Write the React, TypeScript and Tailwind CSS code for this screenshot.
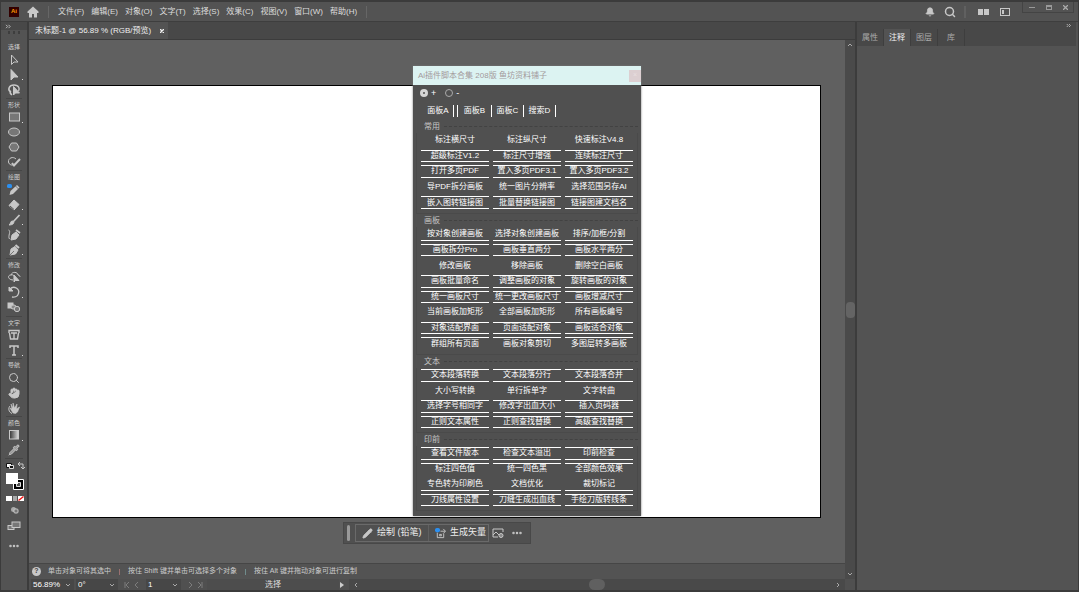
import React from "react";
import { Bell, Search, Hand, Pencil, Pipette, MoreHorizontal } from "lucide-react";

const UI_FONT = "font-['Liberation_Sans','Noto_Sans_CJK_SC',sans-serif]";

const menus = ["文件(F)", "编辑(E)", "对象(O)", "文字(T)", "选择(S)", "效果(C)", "视图(V)", "窗口(W)", "帮助(H)"];

function Glyph({ children }: { children: React.ReactNode }) {
  return (
    <svg viewBox="0 0 14 14" className="size-[14px]" fill="none" stroke="#c8c8c8" strokeWidth="1" aria-hidden="true">
      {children}
    </svg>
  );
}

type Tool = { name: string; icon: React.ReactNode; more?: boolean };
type Section = { label: string; tools: Tool[] };

const lucide = "size-[12px]";

const sections: Section[] = [
  {
    label: "选择",
    tools: [
      { name: "选择工具", icon: <Glyph><path d="M4.500 2v9.500l2.500-2.500h4z" /></Glyph> },
      { name: "直接选择", more: true, icon: <Glyph><path d="M4 1.500v10.500l3-3h4z" fill="#c8c8c8" /></Glyph> },
      { name: "套索", icon: <Glyph><path d="M4 9C0 7 2 2 7 2s6 4 4.500 6M3.500 8c-1 2 0 3 1.500 4" strokeWidth="1.500" /><path d="M6.500 3.500v8.500l2-2h4z" fill="#c8c8c8" /></Glyph> },
    ],
  },
  {
    label: "形状",
    tools: [
      { name: "矩形", more: true, icon: <Glyph><rect x="2.500" y="3" width="10" height="8" fill="#777" /></Glyph> },
      { name: "椭圆", icon: <Glyph><ellipse cx="7" cy="7" rx="5.500" ry="4" fill="#777" /></Glyph> },
      { name: "多边形", icon: <Glyph><path d="M4.500 3h5l2.500 4-2.500 4h-5L2 7z" fill="#777" /></Glyph> },
      { name: "Shaper", icon: <Glyph><path d="M9 4C6 1 1 3 1.500 7c.5 3 4 4 6 2" /><path d="M5 8l2 2.500L13 4" strokeWidth="2" /></Glyph> },
    ],
  },
  {
    label: "绘图",
    tools: [
      { name: "铅笔", icon: <Glyph><path d="M2.500 12l1-4L10 2l2.500 2.500L6 11z" fill="#c8c8c8" stroke="none" /><path d="M8.500 3l3 3" stroke="#535353" strokeWidth=".7" /><rect x="0" y="1" width="5" height="4" rx="1.500" fill="#2b8ff0" stroke="none" /></Glyph> },
      { name: "橡皮擦", more: true, icon: <Glyph><path d="M2 7.500L7 2l5 4.500L7 12z" fill="#c8c8c8" /><path d="M3 8l4 3.500" stroke="#535353" /></Glyph> },
      { name: "画笔", more: true, icon: <Glyph><path d="M12.500 2L6 9" strokeWidth="1.700" /><path d="M2 12c2-1 1-4 3.500-4C8 9 7 12 2 12z" fill="#c8c8c8" /></Glyph> },
      { name: "曲率", icon: <Glyph><path d="M1.500 2c3 1-1 6 1 9" /><path d="M4 12l1-5 4-3 3 3-3 4z" fill="#c8c8c8" /><path d="M9 2l4 3" strokeWidth="1.700" /></Glyph> },
      { name: "钢笔", more: true, icon: <Glyph><path d="M3 12l1-6 4-2.500L11 7l-2.500 4z" fill="#c8c8c8" /><path d="M8.500 2l3.500 3" strokeWidth="2" /><path d="M3 12l4-4" stroke="#535353" strokeWidth=".7" /></Glyph> },
    ],
  },
  {
    label: "修改",
    tools: [
      { name: "形状生成器", icon: <Glyph><path d="M6 10C1 10 0 5 4 5c1-4 7-3 7 0 2 0 2 2 2 2M4 5c3-1 4 2 3 4" /><path d="M7 5v7l1.500-1.500H12z" fill="#c8c8c8" /></Glyph> },
      { name: "旋转", more: true, icon: <Glyph><path d="M3 4c4-4 10 0 8.500 4.500C10.500 12 7 12.500 5 12" strokeWidth="1.300" /><path d="M2 2v4h4z" fill="#c8c8c8" /></Glyph> },
      { name: "混合", icon: <Glyph><rect x="1" y="3" width="5" height="5" fill="#c8c8c8" /><rect x="4" y="5" width="5" height="4" rx="2" fill="#888" /><circle cx="10" cy="9" r="2.700" fill="#777" /></Glyph> },
    ],
  },
  {
    label: "文字",
    tools: [
      { name: "修饰文字", icon: <Glyph><path d="M2 5V2.500h10V5M2.500 5l1 6h7l1-6M4 5h6M7 5v6M5.500 11h3" strokeWidth="1.400" /></Glyph> },
      { name: "文字工具", more: true, icon: <Glyph><path d="M3 5V3h8v2M7 3v9M5 12h4" strokeWidth="1.500" /></Glyph> },
    ],
  },
  {
    label: "导航",
    tools: [
      { name: "缩放", icon: <Search className={lucide} strokeWidth={2} /> },
      { name: "抓手", icon: <Hand className={lucide} strokeWidth={2} fill="#c8c8c8" /> },
      { name: "旋转视图", icon: <Glyph><path d="M6 12L3 7l2 1-1-5 2 4V2l1.500 5L10 3 9.500 8l3-2-2 5-2 1.500z" fill="#c8c8c8" strokeWidth=".6" /><path d="M3 5C1 7 1.500 11 5 12.500" /></Glyph> },
    ],
  },
  {
    label: "颜色",
    tools: [
      { name: "渐变", more: true, icon: <Glyph><defs><linearGradient id="grad"><stop stopColor="#333" /><stop offset="1" stopColor="#ddd" /></linearGradient></defs><rect x="2.500" y="2.500" width="9" height="8.500" fill="url(#grad)" /></Glyph> },
      { name: "吸管", icon: <Pipette className={lucide} strokeWidth={2} fill="#999" /> },
    ],
  },
];

function Toolbar() {
  return (
    <nav aria-label="工具" className="flex w-[28px] shrink-0 flex-col border-r-2 border-[#3c3c3c] bg-[#535353] text-[#c8c8c8]">
      <div className="flex h-2 items-center bg-[#484848] pl-1">
        <svg viewBox="0 0 8 6" className="h-[5px] w-[7px]" fill="none" stroke="#ccc" aria-hidden="true"><path d="M1 1l2 2-2 2M4 1l2 2-2 2" /></svg>
      </div>
      <div className="flex h-[10px] items-start justify-center gap-[3px] pt-px">
        {[0, 1, 2].map((i) => <span key={i} className="h-[3px] w-[2px] bg-[#3e3e3e]" />)}
      </div>
      <div className="flex h-[418px] flex-col justify-between">
        {sections.map((s, i) => (
          <section key={s.label}>
            <h2 className={`mx-[5px] h-[12px] border-t text-center text-[6px] leading-[13px] text-[#d0d0d0] ${i === 0 ? "border-transparent" : "border-[#464646]"}`}>{s.label}</h2>
            {s.tools.map((t) => (
              <button key={t.name} aria-label={t.name} className="relative flex h-[15px] w-full items-center justify-center">
                {t.icon}
                {t.more && <span className="absolute right-1 bottom-[2px] size-px bg-[#ddd]" />}
              </button>
            ))}
          </section>
        ))}
      </div>
      <button aria-label="填色和描边" className="mx-auto">
        <svg viewBox="0 0 22 62" className="h-[62px] w-[22px]" fill="none" aria-hidden="true">
          <path d="M2 .5h18" stroke="#464646" />
          <path d="M3.500 5.500h5v4h-5z" fill="#fff" stroke="#111" />
          <path d="M6.500 7.500h4v3h-4z" fill="#111" stroke="#ddd" />
          <path d="M15 6h5v5M17 4l-2 2 2 2M18 9l2 2 2-2" stroke="#c8c8c8" />
          <path d="M10.500 21.500h10v10h-10z" stroke="#fff" strokeWidth="1" fill="#000" />
          <path d="M13.500 24.500h4v4h-4z" stroke="#ddd" fill="#535353" />
          <path d="M3 15h12v11H3z" fill="#fff" />
          <path d="M3 38h6v5H3z" fill="#fff" /><path d="M10 38h4v5h-4z" fill="#aaa" /><path d="M15 38h6v5h-6z" fill="#fff" /><path d="M15.500 42.500l5-4" stroke="#e11" strokeWidth="1.500" />
          <circle cx="10.500" cy="51.500" r="2.500" fill="#aaa" /><rect x="11" y="51" width="4" height="4" rx="1" fill="#777" stroke="#c8c8c8" />
        </svg>
      </button>
      <button aria-label="屏幕模式" className="mx-auto flex h-[12px] items-center">
        <svg viewBox="0 0 14 10" className="h-[10px] w-[14px]" fill="#777" stroke="#c8c8c8" aria-hidden="true"><rect x="1" y="4.500" width="6" height="4" /><rect x="5" y="1" width="8" height="5.500" /></svg>
      </button>
      <button aria-label="编辑工具栏" className="mx-auto mt-2"><MoreHorizontal className="size-[12px]" strokeWidth={3} /></button>
    </nav>
  );
}

type Edge = "none" | "top" | "bottom" | "both";
type Row = { edge: Edge; items: string[] };

const edges: Record<Edge, string> = {
  none: "border-y border-transparent",
  top: "border-y border-t-white border-b-transparent",
  bottom: "border-y border-t-transparent border-b-white",
  both: "border-y border-white",
};

const groups: { title: string; rows: Row[]; height: string }[] = [
  {
    title: "常用",
    height: "h-[78px]",
    rows: [
      { edge: "none", items: ["标注横尺寸", "标注纵尺寸", "快速标注V4.8"] },
      { edge: "both", items: ["超级标注V1.2", "标注尺寸增强", "连续标注尺寸"] },
      { edge: "both", items: ["打开多页PDF", "置入多页PDF3.1", "置入多页PDF3.2"] },
      { edge: "none", items: ["导PDF拆分画板", "统一图片分辨率", "选择范围另存AI"] },
      { edge: "both", items: ["嵌入图转链接图", "批量替换链接图", "链接图建文档名"] },
    ],
  },
  {
    title: "画板",
    height: "h-[125px]",
    rows: [
      { edge: "bottom", items: ["按对象创建画板", "选择对象创建画板", "排序/加框/分割"] },
      { edge: "both", items: ["画板拆分Pro", "画板垂直两分", "画板水平两分"] },
      { edge: "none", items: ["修改画板", "移除画板", "删除空白画板"] },
      { edge: "both", items: ["画板批量命名", "调整画板的对象", "旋转画板的对象"] },
      { edge: "both", items: ["统一画板尺寸", "统一更改画板尺寸", "画板增减尺寸"] },
      { edge: "none", items: ["当前画板加矩形", "全部画板加矩形", "所有画板编号"] },
      { edge: "both", items: ["对象适配界面", "页面适配对象", "画板适合对象"] },
      { edge: "top", items: ["群组所有页面", "画板对象剪切", "多图层转多画板"] },
    ],
  },
  {
    title: "文本",
    height: "h-[62px]",
    rows: [
      { edge: "both", items: ["文本段落转换", "文本段落分行", "文本段落合并"] },
      { edge: "none", items: ["大小写转换", "单行拆单字", "文字转曲"] },
      { edge: "both", items: ["选择字号相同字", "修改字出血大小", "插入页码器"] },
      { edge: "both", items: ["正则文本属性", "正则查找替换", "高级查找替换"] },
    ],
  },
  {
    title: "印前",
    height: "h-[62px]",
    rows: [
      { edge: "both", items: ["查看文件版本", "检查文本溢出", "印前检查"] },
      { edge: "top", items: ["标注四色值", "统一四色黑", "全部颜色效果"] },
      { edge: "bottom", items: ["专色转为印刷色", "文档优化", "裁切标记"] },
      { edge: "both", items: ["刀线属性设置", "刀缝生成出血线", "手绘刀版转线条"] },
    ],
  },
];

function ScriptPanel() {
  return (
    <div role="dialog" aria-label="脚本合集" className="absolute top-[26px] left-[384px] h-[450px] w-[228px] bg-[#505050] text-[8px] text-white shadow-[0_0_2px_#777]">
      <header className="flex h-[19px] items-center justify-between bg-[#dcf3f2] pl-[5px] text-[8px] text-[#a39a9c]">
        <span>Ai插件脚本合集 208版 鱼坊资料铺子</span>
        <button aria-label="关闭" className="flex h-3 w-3 items-center justify-center bg-[#dccfd1] text-[7px] text-[#e9dfe0]">×</button>
      </header>
      <div className="flex h-4 items-center gap-[9px] pl-[7px]">
        {["+", "-"].map((v, i) => (
          <label key={v} className="flex items-center gap-[3px] text-[9px] leading-none">
            <input type="radio" name="mode" defaultChecked={i === 0} className="size-2 appearance-none rounded-full border border-[#aaa] checked:border-[3px] checked:border-[#d5d5d5]" />
            {v}
          </label>
        ))}
      </div>
      <div role="tablist" className="ml-[10px] flex h-[19px] items-center">
        {["面板A", "面板B", "面板C", "搜索D"].map((t, i) => (
          <button key={t} role="tab" className={`h-3 border-white text-center leading-[11px] ${i === 0 ? "mr-[3px] w-[31px] border-r" : i === 1 ? "w-[35px] border-x" : "w-[32px] border-r"}`}>{t}</button>
        ))}
      </div>
      <div className="flex flex-col px-[3px]">
        {groups.map((g) => (
          <section key={g.title}>
            <div className="flex h-[13px] items-center gap-1 pl-2 leading-none text-[#c5c5c5]">
              <h3>{g.title}</h3>
              <span className="flex-1 border-t border-dashed border-[#424242]" />
            </div>
            <div className="border-x border-b border-[#4a4a4a] pb-[2px]">
              <div className={`grid auto-rows-fr grid-cols-3 gap-x-1 px-1 ${g.height}`}>
                {g.rows.flatMap((r) => r.items.map((t) => (
                  <button key={t} className={`mt-px mb-[2px] flex min-h-0 items-center justify-center leading-none whitespace-nowrap ${edges[r.edge]}`}>{t}</button>
                )))}
              </div>
            </div>
          </section>
        ))}
      </div>
    </div>
  );
}

function TaskBar() {
  return (
    <div role="toolbar" aria-label="上下文任务栏" className="absolute top-[482px] left-[314px] flex h-[22px] w-[188px] items-center border border-[#484848] bg-[#505050] text-[9px] text-[#eee]">
      <span className="mx-[3px] h-4 w-[3px] rounded bg-[#999]" />
      <div className="ml-[2px] flex h-[18px] w-[134px] items-center border border-[#6a6a6a]">
        <button className="flex h-full flex-1 items-center gap-1 border-r border-[#606060] pl-[6px] whitespace-nowrap"><Pencil className="size-[11px] text-[#c8c8c8]" fill="#c8c8c8" />绘制 (铅笔)</button>
        <button className="flex h-full w-[59px] items-center gap-1 pl-[6px] whitespace-nowrap">
          <svg viewBox="0 0 12 12" className="size-[11px] shrink-0" fill="none" stroke="#c8c8c8" aria-hidden="true"><path d="M2.500 5v5.500h7V6M6 3.500h5M9 1l2.500 2.500L9 6M5 7h2v1.500H5z" /><rect x="0" y="0" width="5.500" height="4.500" rx="2" fill="#2b8ff0" stroke="none" /></svg>
          生成矢量
        </button>
      </div>
      <button aria-label="图像" className="ml-[3px]">
        <svg viewBox="0 0 12 12" className="size-3" fill="none" stroke="#c8c8c8" aria-hidden="true"><path d="M6 10H1V2h10v3M1 8l3-3 3 3" /><circle cx="9" cy="8.500" r="2" fill="#888" /></svg>
      </button>
      <button aria-label="更多" className="ml-[7px]"><MoreHorizontal className="size-3 text-[#c8c8c8]" strokeWidth={3} /></button>
    </div>
  );
}

function Arrow({ d }: { d: string }) {
  return <svg viewBox="0 0 6 6" className="size-[6px]" fill="none" stroke="#aaa" aria-hidden="true"><path d={d} /></svg>;
}

function Picker({ label, value, width }: { label: string; value: string; width: string }) {
  return (
    <span className={`relative flex h-full items-center bg-[#474747] ${width}`}>
      <select aria-label={label} className="h-full w-full appearance-none pl-[2px] text-[8px] leading-none text-white"><option>{value}</option></select>
      <span className="pointer-events-none absolute right-[3px]"><Arrow d="M1 2l2 2 2-2" /></span>
    </span>
  );
}

function StatusBar() {
  return (
    <footer className="flex h-[11px] shrink-0 items-center bg-[#505050] text-[8px] text-[#ddd]">
      <div className="flex h-full items-center gap-[2px] pl-[2px]">
        <Picker label="缩放" value="56.89%" width="w-[43px]" />
        <Picker label="旋转" value="0°" width="w-[42px]" />
        <div className="flex w-[24px] justify-center gap-[4px] opacity-50"><Arrow d="M1 0v6M5 0L2 3l3 3" /><Arrow d="M4 0L1 3l3 3" /></div>
        <Picker label="画板" value="1" width="w-[35px]" />
        <div className="flex w-[24px] justify-center gap-[4px] opacity-50"><Arrow d="M2 0l3 3-3 3" /><Arrow d="M1 0l3 3-3 3M5 0v6" /></div>
      </div>
      <div className="flex h-full w-[132px] items-center justify-center bg-[#4d4d4d]">选择</div>
      <svg viewBox="0 0 6 6" className="mr-1 size-[6px]" fill="#ccc" aria-hidden="true"><path d="M1 0l4 3-4 3z" /></svg>
      <div className="flex h-full flex-1 items-center justify-between bg-[#494949] px-1">
        <Arrow d="M4 1L2 3l2 2" />
        <span className="h-full w-4 rounded-full bg-[#606060]" />
        <Arrow d="M2 1l2 2-2 2" />
      </div>
      <span className="h-full w-[10px]" />
    </footer>
  );
}

export default function App() {
  return (
    <div className={`flex h-screen flex-col overflow-hidden border-t-2 border-r border-b-2 border-l border-[#3b3b3b] bg-[#535353] text-[8px] text-[#ddd] ${UI_FONT}`}>
      <header className="flex h-5 shrink-0 items-center border-b border-[#3e3e3e]">
        <span className="ml-2 flex size-[10px] items-center justify-center bg-[#330000] text-[6px] font-bold text-[#ff9a00]">Ai</span>
        <button aria-label="主页" className="ml-2">
          <svg viewBox="0 0 12 12" className="size-3" fill="#c8c8c8" aria-hidden="true"><path d="M6 .5L.5 5.500V7H2v4.500h3V8h2v3.500h3V7h1.500V5.500z" /></svg>
        </button>
        <span className="ml-[9px] h-3 border-l border-[#666]" />
        <nav className="ml-[9px] flex gap-[7px]">
          {menus.map((m) => <a key={m} href="#" className="whitespace-nowrap">{m}</a>)}
        </nav>
        <span className="ml-[9px] h-3 border-l border-[#666]" />
        <div className="ml-auto flex h-full items-center text-[#c8c8c8]">
          <button aria-label="通知"><Bell className="size-[10px]" fill="#c8c8c8" /></button>
          <button aria-label="搜索" className="ml-[9px]"><Search className="size-3" strokeWidth={3} /></button>
          <span className="ml-2 h-3 border-l-2 border-[#606060]" />
          <button aria-label="排列文档" className="ml-3 flex gap-px"><span className="h-[6px] w-[5px] bg-[#c8c8c8]" /><span className="h-[6px] w-[5px] bg-[#c8c8c8]" /></button>
          <button aria-label="切换工作区" className="ml-[11px] flex h-2 w-[10px] border border-[#c8c8c8] p-px"><span className="w-[2px] bg-[#c8c8c8]" /></button>
          <div className="mr-1 ml-3 flex h-[11px] w-[52px] items-center justify-around self-start border border-t-0 border-[#444]">
            <button aria-label="最小化" className="h-px w-[6px] bg-[#999]" />
            <button aria-label="最大化" className="h-[5px] w-[6px] border border-t-2 border-[#999]" />
            <button aria-label="关闭"><svg viewBox="0 0 6 6" className="size-[5px]" stroke="#aaa" strokeWidth="1.500"><path d="M0 0l6 6M6 0L0 6" /></svg></button>
          </div>
        </div>
      </header>

      <div className="flex min-h-0 flex-1">
        <Toolbar />
        <main className="flex min-w-0 flex-1 flex-col">
          <div className="flex h-[18px] shrink-0 border-b border-[#3c3c3c] bg-[#484848]">
            <div className="flex w-[139px] items-center justify-between bg-[#535353] pr-1 pl-[6px] text-[8px] whitespace-nowrap text-[#eee]">
              未标题-1 @ 56.89 % (RGB/预览)
              <button aria-label="关闭文档"><svg viewBox="0 0 6 6" className="size-[4px]" stroke="#eee" strokeWidth="2"><path d="M0 0l6 6M6 0L0 6" /></svg></button>
            </div>
          </div>
          <div className="flex min-h-0 flex-1">
            <div className="flex min-w-0 flex-1 flex-col">
              <div className="relative flex min-h-0 flex-1 bg-[#606060] py-[45px] pr-6 pl-[23px]">
                <div className="flex-1 border border-black bg-white" />
                <ScriptPanel />
                <TaskBar />
              </div>
              <div className="flex h-4 shrink-0 items-center border-t border-[#464646] pl-[3px] text-[7px] whitespace-nowrap text-[#ccc]">
                <span className="mr-[7px] flex size-[9px] items-center justify-center rounded-full bg-[#c8c8c8] font-bold text-[#444]">?</span>
                <span>单击对象可将其选中</span>
                <span className="mx-2 h-[6px] border-l border-[#997070]" />
                <span>按住 Shift 键并单击可选择多个对象</span>
                <span className="mx-2 h-[6px] border-l border-[#708c8c]" />
                <span>按住 Alt 键并拖动对象可进行复制</span>
              </div>
            </div>
            <div className="flex w-[10px] shrink-0 flex-col items-center justify-between bg-[#4a4a4a] py-[2px]">
              <Arrow d="M1 4l2-2 2 2" />
              <span className="h-4 w-[9px] rounded bg-[#646464]" />
              <Arrow d="M1 2l2 2 2-2" />
            </div>
          </div>
          <StatusBar />
        </main>
        <aside className="flex w-[223px] shrink-0 flex-col border-l-2 border-[#3c3c3c] pr-[2px]">
          <div className="flex h-[7px] shrink-0 items-center justify-end bg-[#484848] pr-1">
            <svg viewBox="0 0 8 6" className="h-[5px] w-[6px]" fill="none" stroke="#ccc" aria-hidden="true"><path d="M1 1l2 2-2 2M4 1l2 2-2 2" /></svg>
          </div>
          <div role="tablist" className="flex h-[17px] shrink-0 bg-[#484848] text-[8px] text-[#aaa]">
            {["属性", "注释", "图层", "库"].map((t, i) => (
              <button key={t} role="tab" aria-selected={i === 1} className={`w-[27px] border-r border-[#3e3e3e] ${i === 1 ? "bg-[#535353] text-[#f2f2f2]" : ""}`}>{t}</button>
            ))}
          </div>
        </aside>
      </div>
    </div>
  );
}
